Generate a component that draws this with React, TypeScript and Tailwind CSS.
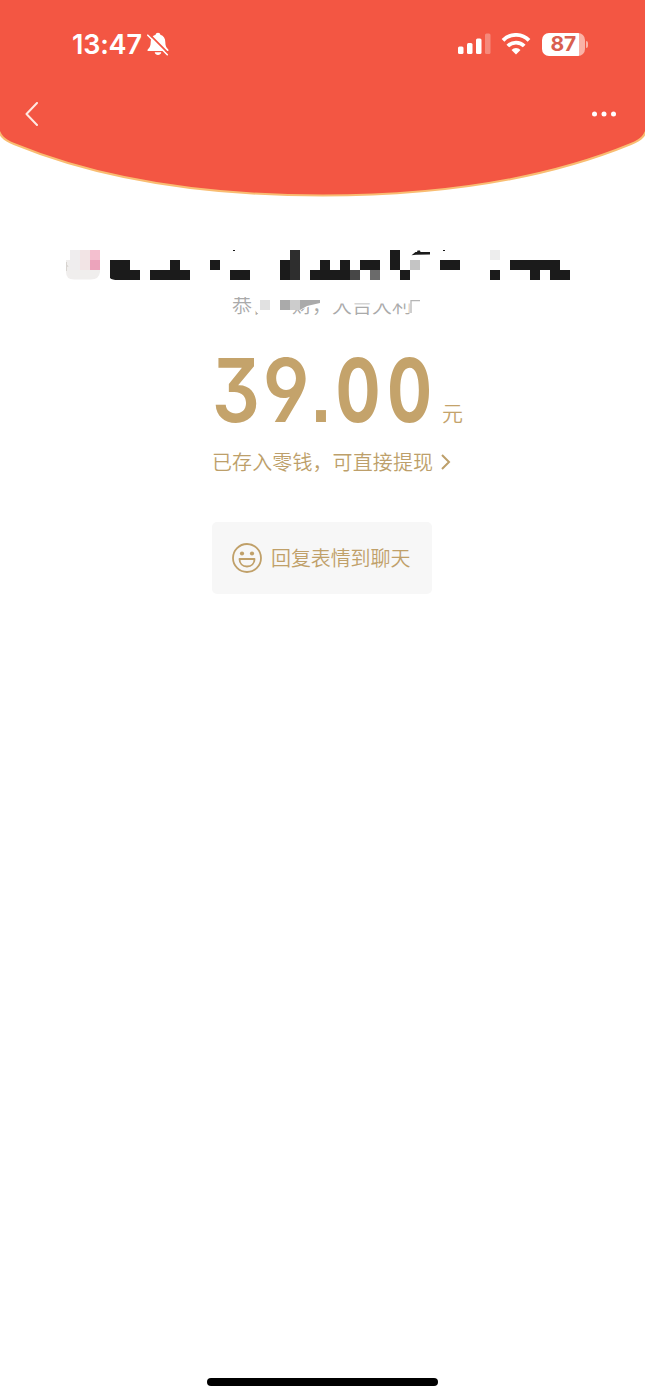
const INK = '#1b1b1b'

// [x, y, width, height, colour], on a 10px mosaic grid
const NAME_BLOCKS: [number, number, number, number, string][] = [
  [130, 20, 10, 10, INK],
  [150, 20, 40, 10, INK],
  [170, 10, 10, 10, INK],
  [210, 10, 10, 10, INK],
  [230, 20, 20, 10, INK],
  [233, 0, 2, 1, INK],
  [280, 10, 10, 20, INK],
  [290, 0, 10, 30, '#2e2e2e'],
  [310, 20, 40, 10, INK],
  [320, 10, 10, 10, INK],
  [340, 10, 10, 10, INK],
  [350, 20, 10, 10, '#474747'],
  [360, 10, 20, 10, INK],
  [370, 20, 10, 10, '#6b6b6b'],
  [390, 0, 10, 20, INK],
  [400, 20, 10, 10, INK],
  [410, 10, 10, 10, '#c4c4c4'],
  [443, 0, 2, 1, INK],
  [440, 10, 20, 10, INK],
  [490, 0, 10, 10, '#ededed'],
  [490, 20, 10, 10, INK],
  [510, 10, 50, 10, INK],
  [530, 20, 10, 10, INK],
  [550, 20, 20, 10, INK],
]

function StatusBar() {
  return (
    <div className="flex h-[88px] items-center pl-[72px] pr-[57px] text-white">
      <span className="font-['Inter',sans-serif] text-[27px] leading-none font-semibold tracking-[-0.2px]">13:47</span>
      <svg className="ml-[4px] h-6 w-6" viewBox="0 0 24 24" fill="none">
        <path d="M12 .8c-1.400 0-2.200.9-2.400 1.900C6.300 3.800 4.700 6.400 4.700 10c0 4-1 5.500-2.800 7.200-.8.900-.5 1.900.6 1.900h19c1.100 0 1.400-1 .6-1.900C20.300 15.500 19.300 14 19.300 10c0-3.600-1.600-6.200-4.900-7.300-.2-1-1-1.900-2.400-1.900zM8.700 20.200c.4 1.700 1.600 2.700 3.300 2.700s2.900-1 3.300-2.700z" fill="white" />
        <path d="M3.200 2.200 23 22" stroke="#f35643" strokeWidth="1.800" />
        <path d="M1.800 3.200 21.300 22.700" stroke="white" strokeWidth="1.600" strokeLinecap="round" />
      </svg>

      <svg className="ml-auto h-[22px] w-[34px]" viewBox="0 0 34 22" fill="white">
        <rect x="0" y="13.500" width="5.500" height="7.500" rx="1.500" />
        <rect x="9" y="10" width="5.500" height="11" rx="1.500" />
        <rect x="18" y="5.500" width="5.500" height="15.500" rx="1.500" />
        <rect x="27" y="0.500" width="5.500" height="20.500" rx="1.500" opacity=".3" />
      </svg>
      <svg className="ml-[9px] h-[22px] w-[30px]" viewBox="0 0 30 22" fill="none" stroke="white" strokeWidth="3.800">
        <path d="M2 7.300a18.300 18.300 0 0 1 26 0" />
        <path d="M6.800 13a11.600 11.600 0 0 1 16.400 0" />
        <path d="M15 21.500 10.500 17a6.300 6.300 0 0 1 9 0z" fill="white" stroke="none" />
      </svg>
      <div className="ml-[11px] flex items-center">
        <div className="flex h-[23px] w-[43px] items-center justify-center rounded-[7px] bg-linear-to-r from-white from-86% to-[#fab2a7] to-86%">
          <span className="mr-px scale-x-[1.05] font-['Inter',sans-serif] text-[20px] leading-none font-bold text-[#d95f50]">87</span>
        </div>
        <div className="ml-[1px] h-[7px] w-[2px] rounded-r-full bg-[#fab2a7]" />
      </div>
    </div>
  )
}

function Header() {
  return (
    <header className="relative h-[200px]">
      <svg className="absolute inset-0 h-[200px] w-[645px]" viewBox="0 0 645 200">
        <path
          d="M-3 -3V124C-1 136 4 140 14 144C104 181 214 195.500 322.500 195.500S541 181 631 144C641 140 646 136 648 124V-3Z"
          fill="#f35643"
          stroke="#f9bd72"
          strokeWidth="2"
        />
      </svg>
      <div className="relative">
        <StatusBar />
        <nav className="flex h-[52px] items-center justify-between pl-6 pr-[27px]">
          <svg className="h-6 w-4" viewBox="0 0 16 24" fill="none" stroke="#ffe9e2" strokeWidth="2" strokeLinecap="round" strokeLinejoin="round">
            <path d="M13 1 2.500 12 13 23" />
          </svg>
          <svg className="h-[6px] w-[26px]" viewBox="0 0 26 6" fill="white">
            <circle cx="2.500" cy="3" r="2.500" />
            <circle cx="12" cy="3" r="2.500" />
            <circle cx="21.500" cy="3" r="2.500" />
          </svg>
        </nav>
      </div>
    </header>
  )
}

function SenderName() {
  return (
    <svg className="mt-[50px] h-[30px] w-[645px]" viewBox="0 0 645 30" shapeRendering="crispEdges">
      <path d="M66 10v12q0 7.500 8 7.500h17q8 0 9-7.500V0H70v10z" fill="#f0eeed" shapeRendering="auto" />
      <path d="M66.500 12v9M67 15l1 2" stroke="#d8d4d0" strokeWidth="1" shapeRendering="auto" />
      <rect x="70" y="0" width="10" height="20" fill="#efedee" />
      <rect x="80" y="0" width="10" height="20" fill="#f2e4e5" />
      <rect x="90" y="0" width="10" height="10" fill="#f4bfcf" />
      <rect x="90" y="10" width="10" height="10" fill="#eca3bb" />
      <path d="M110 10h20v20h-12q-6 0-8-2z" fill={INK} shapeRendering="auto" />
      {NAME_BLOCKS.map(([x, y, w, h, fill]) => (
        <rect key={`${x}-${y}`} x={x} y={y} width={w} height={h} fill={fill} />
      ))}
      <path d="M411.500 5.200l4-3.200 1.500 0 .5-1.500h2.500l.5 1.500h9.500v2.500l-14 .3z" fill={INK} shapeRendering="auto" />
    </svg>
  )
}

function Greeting() {
  return (
    <div className="relative mt-[13px] h-6 pl-[232px]">
      <p className="text-[20px] leading-6 font-[350] whitespace-nowrap text-[#aaa]">恭喜发财，大吉大利</p>
      <svg className="absolute top-0 left-[231px] h-6 w-[200px]" viewBox="231 0 200 24">
        <path d="M231 0H431V10.500H411V24H409.500V10.500H318L300 17L292 15V24H261L252 14V4H231Z" fill="white" />
        <rect x="260" y="7" width="10" height="10" fill="#e1e1e1" />
        <rect x="280" y="7" width="10" height="10" fill="#aaa" />
        <rect x="290" y="7" width="10" height="10" fill="#ccc" />
        <path d="M300 7h20v3l-13 3-7 4z" fill="#aaa" />
        <path d="M411 20V7.700h9" fill="none" stroke="#b5b5b5" strokeWidth="1.300" />
      </svg>
    </div>
  )
}

function Amount() {
  return (
    <div className="flex h-[90px] w-[225px] items-center font-['Inter',sans-serif] text-[88px] leading-none font-semibold [font-feature-settings:'cv04','cv09']">
      <span className="flex w-[50px] scale-x-[.86] justify-center">3</span>
      <span className="flex w-[50px] scale-x-[.88] justify-center">9</span>
      <span className="flex w-[20px] scale-x-[.88] justify-center pt-[10px] font-['Liberation_Sans',sans-serif] text-[80px] leading-[84px] font-bold">.</span>
      <span className="ml-px flex w-[52px] scale-x-[.76] justify-center font-bold">0</span>
      <span className="flex w-[51px] scale-x-[.76] justify-center font-bold">0</span>
    </div>
  )
}

export default function App() {
  return (
    <div className="flex h-[1398px] w-[645px] flex-col overflow-hidden bg-white font-['Noto_Sans_CJK_SC',sans-serif]">
      <Header />

      <main className="flex flex-1 flex-col">
        <SenderName />
        <Greeting />

        <div className="mt-[28px] flex h-[90px] items-end pl-[211px] text-[#c4a36b]">
          <Amount />
          <span className="mb-[8px] ml-[6px] text-[21px] leading-[30px] font-[350]">元</span>
        </div>

        <div className="mt-[12px] flex h-[30px] items-center pl-[212px] text-[#bd9f6a]">
          <span className="text-[20px] leading-[30px] font-[350] tracking-[0.1px]">已存入零钱，可直接提现</span>
          <svg className="ml-[8px] h-4 w-[10px]" viewBox="0 0 10 16" fill="none" stroke="currentColor" strokeWidth="2">
            <path d="M1 1l7 7-7 7" />
          </svg>
        </div>

        <button className="mt-[45px] ml-[212px] flex h-[72px] w-[220px] items-center rounded-[5px] bg-[#f7f7f7] pl-5 text-[#c0a069]">
          <svg className="h-[30px] w-[30px]" viewBox="0 0 30 30" fill="none" stroke="currentColor" strokeWidth="1.800">
            <circle cx="15" cy="15" r="14" />
            <circle cx="10" cy="10.500" r="2.100" fill="currentColor" stroke="none" />
            <circle cx="20" cy="10.500" r="2.100" fill="currentColor" stroke="none" />
            <path d="M7.500 16h15c0 4.500-3 7.500-7.500 7.500s-7.500-3-7.500-7.500z" strokeLinejoin="round" />
          </svg>
          <span className="ml-[9px] text-[20px] leading-[30px] font-[350] tracking-[-0.1px]">回复表情到聊天</span>
        </button>
      </main>

      {/* Home indicator */}
      <div className="mb-[12px] ml-[207px] h-2 w-[231px] rounded-full bg-black" />
    </div>
  )
}
